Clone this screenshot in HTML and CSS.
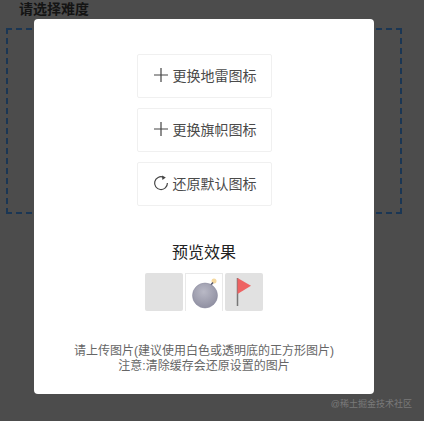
FILE: index.html
```html
<!DOCTYPE html>
<html lang="zh-CN">
<head>
    <meta charset="UTF-8">
    <title>扫雷</title>
    <link rel="stylesheet" href="styles.css">
</head>
<body>
    <div class="page">
        <h3 class="level-title">请选择难度</h3>
        <div class="level-box"></div>
    </div>

    <div class="mask">
        <div class="dialog">
            <div class="btn-list">
                <button class="icon-btn">
                    <svg class="btn-icon" viewBox="0 0 16 16"><path d="M8 1v14M1 8h14" /></svg>
                    <span>更换地雷图标</span>
                </button>
                <button class="icon-btn">
                    <svg class="btn-icon" viewBox="0 0 16 16"><path d="M8 1v14M1 8h14" /></svg>
                    <span>更换旗帜图标</span>
                </button>
                <button class="icon-btn">
                    <svg class="btn-icon" viewBox="0 0 16 16"><path d="M10.400 2.200A6.400 6.400 0 1 0 14.400 8" /><path class="arrow" d="M9 0.400l3.800 2.200-3.400 2.400z" /></svg>
                    <span>还原默认图标</span>
                </button>
            </div>

            <div class="preview-title">预览效果</div>
            <div class="preview-row">
                <div class="cell"></div>
                <div class="cell cell-open">
                    <svg viewBox="0 0 38 38">
                        <defs>
                            <radialGradient id="bombShade" cx="0.450" cy="0.350" r="0.700">
                                <stop offset="0" stop-color="#b9b9c6" />
                                <stop offset="1" stop-color="#8d8d9f" />
                            </radialGradient>
                        </defs>
                        <circle class="spark" cx="28" cy="7" r="2.500" />
                        <path class="fuse" d="M24 12l3-3.500" />
                        <circle class="bomb" cx="19" cy="21.500" r="12.500" fill="url(#bombShade)" />
                    </svg>
                </div>
                <div class="cell">
                    <svg viewBox="0 0 38 38">
                        <path class="pole" d="M12.500 5v28" />
                        <path class="flag" d="M12.500 5l13.500 7.700-13.500 8.300z" />
                    </svg>
                </div>
            </div>

            <div class="tips">
                <p>请上传图片(建议使用白色或透明底的正方形图片)</p>
                <p>注意:清除缓存会还原设置的图片</p>
            </div>
        </div>
    </div>

    <div class="watermark">@稀土掘金技术社区</div>
</body>
</html>
```

FILE: styles.css
```css
html, body {
    height: 100%;
}
body {
    margin: 0;
    background: #4c4c4c;
    font-family: "Liberation Sans", "Noto Sans CJK SC", sans-serif;
    overflow: hidden;
}
.page {
    padding: 0 22px 0 6px;
}
.level-title {
    margin: 0;
    padding-left: 13px;
    height: 28px;
    line-height: 18px;
    font-size: 14px;
    font-weight: bold;
    color: #141414;
}
.level-box {
    height: 182px;
    border: 2px dashed #1a3654;
}

.mask {
    position: absolute;
    left: 34px;
    top: 19px;
}
.dialog {
    width: 340px;
    height: 375px;
    box-sizing: border-box;
    padding-top: 35px;
    background: #fff;
    border-radius: 4px;
    display: flex;
    flex-direction: column;
    align-items: center;
}
.btn-list {
    display: flex;
    flex-direction: column;
    gap: 10px;
    margin-left: 1px;
}
.icon-btn {
    display: flex;
    align-items: center;
    justify-content: center;
    gap: 4px;
    width: 135px;
    height: 44px;
    padding: 0 0 2px;
    background: #fff;
    border: 1px solid #f0f0f0;
    border-radius: 2px;
    font-family: inherit;
    font-size: 14px;
    color: #4a4a4a;
}
.btn-icon {
    width: 16px;
    height: 16px;
    fill: none;
    stroke: #444;
    stroke-width: 1.200;
}
.btn-icon .arrow {
    fill: #444;
    stroke: none;
}

.preview-title {
    margin-top: 35px;
    height: 24px;
    line-height: 24px;
    font-size: 16px;
    color: #222;
}
.preview-row {
    display: flex;
    gap: 2px;
    margin-top: 8px;
}
.cell {
    width: 38px;
    height: 38px;
    background: #e1e1e1;
    border-radius: 2px;
}
.cell-open {
    background: #fff;
    border: 1px solid #e9e9e9;
    border-bottom: 0;
    box-sizing: border-box;
    border-radius: 0;
}
.cell svg {
    display: block;
    width: 38px;
    height: 38px;
}
.bomb {
    stroke: #85859a;
    stroke-width: 0.500;
}
.fuse {
    fill: none;
    stroke: #55556a;
    stroke-width: 1.500;
}
.spark {
    fill: #f5d9a0;
}
.pole {
    stroke: #777;
    stroke-width: 1.500;
}
.flag {
    fill: #ee6262;
}

.tips {
    margin-top: 33px;
    font-size: 12px;
    line-height: 15px;
    color: #666;
    text-align: center;
}
.tips p {
    margin: 0;
}

.watermark {
    position: absolute;
    right: 12px;
    bottom: 10px;
    font-size: 9px;
    line-height: 14px;
    color: #7a7a7a;
}
```
